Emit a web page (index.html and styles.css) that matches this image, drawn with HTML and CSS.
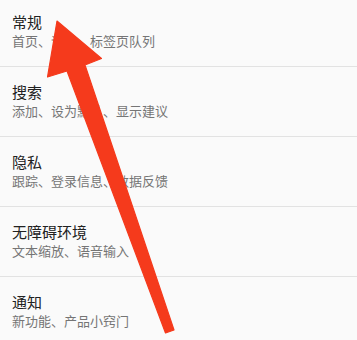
FILE: index.html
```html
<!DOCTYPE html>
<html lang="zh-CN">
<head>
<meta charset="utf-8">
<title>设置</title>
<link rel="stylesheet" href="styles.css">
</head>
<body>
<div class="screen">
  <ul class="settings">
    <li class="item">
      <div class="title">常规</div>
      <div class="summary">首页、语言、标签页队列</div>
    </li>
    <li class="item">
      <div class="title">搜索</div>
      <div class="summary">添加、设为默认、显示建议</div>
    </li>
    <li class="item">
      <div class="title">隐私</div>
      <div class="summary">跟踪、登录信息、数据反馈</div>
    </li>
    <li class="item">
      <div class="title">无障碍环境</div>
      <div class="summary">文本缩放、语音输入</div>
    </li>
    <li class="item">
      <div class="title">通知</div>
      <div class="summary">新功能、产品小窍门</div>
    </li>
  </ul>
  <svg class="arrow" width="357" height="340" viewBox="0 0 357 340" aria-hidden="true">
    <polygon points="57,21 101.5,58.5 85,65 174,330 165.5,333 67,71 47.5,77" fill="#f53a1c" stroke="#f53a1c" stroke-width="1.2" stroke-linejoin="round"/>
  </svg>
</div>
</body>
</html>
```

FILE: styles.css
```css
html, body {
  margin: 0;
  padding: 0;
  background: #fafafa;
}

body {
  font-family: "Noto Sans CJK SC", "Noto Sans", sans-serif;
}

.screen {
  position: relative;
  width: 357px;
  height: 340px;
  overflow: hidden;
  background: #fafafa;
}

.settings {
  list-style: none;
  margin: -3px 0 0 0;
  padding: 0;
  display: flex;
  flex-direction: column;
}

.item {
  padding: 15px 12px 16px 12px;
  border-bottom: 1px solid #e2e2e2;
  display: flex;
  flex-direction: column;
}

.title {
  font-size: 15px;
  line-height: 20px;
  color: #212121;
}

.summary {
  font-size: 13px;
  line-height: 18px;
  color: #757575;
}

.arrow {
  position: absolute;
  left: 0;
  top: 0;
}
```
